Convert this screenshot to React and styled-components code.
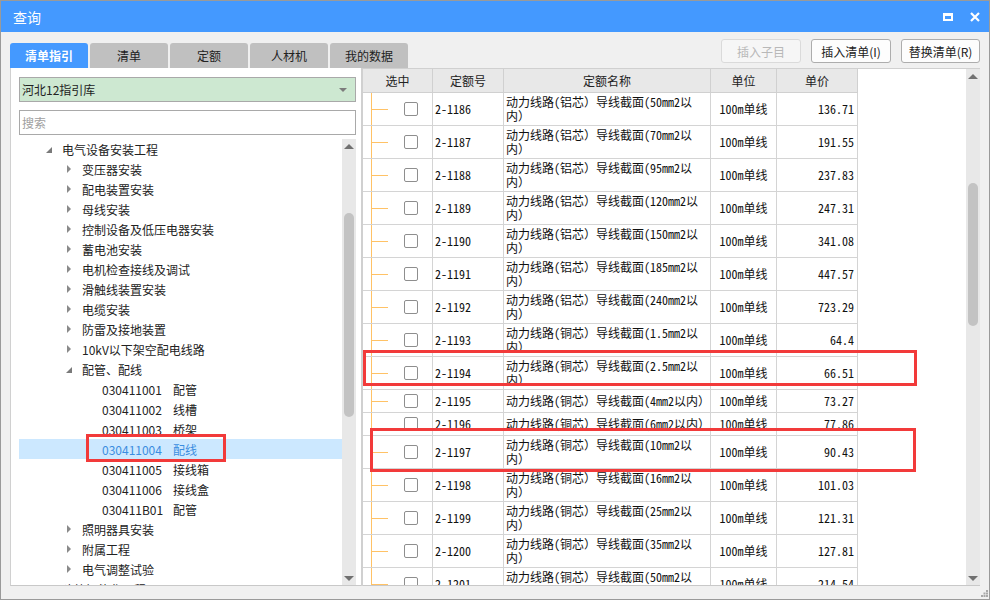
import React from 'react';
import styled, { createGlobalStyle } from 'styled-components';

const GlobalStyle = createGlobalStyle`
  html, body {
    margin: 0;
    padding: 0;
    background: #fff;
  }
  body {
    font-family: "Noto Sans CJK SC", "Microsoft YaHei", sans-serif;
  }
`;

const Window = styled.div`
  width: 990px;
  height: 600px;
  box-sizing: border-box;
  border: 1px solid #9a9a9a;
  background: #f0f0f0;
  display: flex;
  flex-direction: column;
  overflow: hidden;
  font-family: "Noto Sans CJK SC", "Microsoft YaHei", sans-serif;
  font-size: 12px;
  color: #222;
`;

const TitleBar = styled.div`
  height: 31px;
  flex: none;
  background: #4499ff;
  display: flex;
  align-items: center;
  justify-content: space-between;
  padding: 0 9px 0 12px;
  color: #fff;
  font-size: 14px;
`;

const TitleActions = styled.div`
  display: flex;
  align-items: center;
  gap: 17px;
`;

const MaxIcon = styled.span`
  display: block;
  width: 10px;
  height: 8px;
  box-sizing: border-box;
  border: 2px solid #fff;
  border-top-width: 3px;
`;

const Toolbar = styled.div`
  height: 36px;
  flex: none;
  display: flex;
  justify-content: space-between;
  padding: 0 9px;
`;

const Tabs = styled.div`
  display: flex;
  gap: 2px;
  align-self: flex-end;
`;

const Tab = styled.div`
  width: 78px;
  height: 25px;
  display: flex;
  align-items: center;
  justify-content: center;
  border-radius: 3px 3px 0 0;
  font-size: 12px;
  background: ${p => (p.$active ? '#4499ff' : '#c0c0c0')};
  color: ${p => (p.$active ? '#fff' : '#222')};
  font-weight: ${p => (p.$active ? 600 : 400)};
`;

const Buttons = styled.div`
  display: flex;
  gap: 10px;
  margin-top: 7px;
`;

const ToolButton = styled.button`
  width: ${p => p.$w}px;
  height: 24px;
  box-sizing: border-box;
  padding: 0;
  border: 1px solid ${p => (p.disabled ? '#dadada' : '#adadad')};
  border-radius: 3px;
  background: ${p => (p.disabled ? '#f6f6f6' : '#fdfdfd')};
  color: ${p => (p.disabled ? '#b8b8b8' : '#222')};
  font-family: inherit;
  font-size: 12px;
`;

const Content = styled.div`
  height: 518px;
  flex: none;
  display: flex;
  padding: 0 9px;
`;

const LeftPanel = styled.div`
  position: relative;
  width: 351px;
  box-sizing: border-box;
  background: #fff;
  border-left: 1px solid #d0d0d0;
  border-bottom: 1px solid #c8c8c8;
  padding: 9px 5px 0 8px;
  display: flex;
  flex-direction: column;
`;

const Field = styled.div`
  height: 25px;
  flex: none;
  box-sizing: border-box;
  border: 1px solid #a9a9a9;
  display: flex;
  align-items: center;
  justify-content: space-between;
  padding: 0 8px 0 2px;
  background: ${p => (p.$tint ? '#cde8d1' : '#fff')};
  margin-top: ${p => p.$gap || 0}px;
  color: ${p => (p.$muted ? '#a0a0a0' : '#222')};
  font-size: 12px;
`;

const DropArrow = styled.span`
  width: 0;
  height: 0;
  border-left: 4px solid transparent;
  border-right: 4px solid transparent;
  border-top: 4px solid #7c7c7c;
`;

const TreeArea = styled.div`
  flex: 1;
  margin-top: 4px;
  display: flex;
  min-height: 0;
`;

const TreeList = styled.div`
  flex: 1;
  overflow: hidden;
`;

const TreeRow = styled.div`
  height: 20px;
  display: flex;
  align-items: center;
  padding-left: ${p => 27 + (p.$level - 1) * 20}px;
  background: ${p => (p.$selected ? '#cce8ff' : 'transparent')};
  color: ${p => (p.$selected ? '#3b8de0' : '#222')};
  white-space: nowrap;
  font-size: 12px;
`;

const Toggle = styled.span`
  width: 16px;
  flex: none;
  display: flex;
  align-items: center;
`;

const Caret = styled.span`
  width: 0;
  height: 0;
  ${p =>
    p.$open
      ? `border-left: 6px solid transparent; border-bottom: 6px solid #7a7a7a; margin-top: 1px;`
      : `border-top: 4px solid transparent; border-bottom: 4px solid transparent; border-left: 4px solid #8a8a8a; margin-left: 1px;`}
`;

const Code = styled.span`
  display: inline-block;
  width: 71px;
`;

const ScrollBar = styled.div`
  width: 14px;
  flex: none;
  background: #e8e8e8;
  display: flex;
  flex-direction: column;
  align-items: center;
`;

const ScrollArrow = styled.div`
  height: 14px;
  flex: none;
  display: flex;
  align-items: center;
  justify-content: center;
  &::after {
    content: '';
    border-left: 5px solid transparent;
    border-right: 5px solid transparent;
    ${p => (p.$down ? 'border-top: 5px solid #707070;' : 'border-bottom: 5px solid #707070;')}
  }
`;

const ScrollTrack = styled.div`
  flex: 1;
  width: 100%;
  display: flex;
  justify-content: center;
`;

const Thumb = styled.div`
  width: 10px;
  margin-top: ${p => p.$top}px;
  height: ${p => p.$h}px;
  border-radius: 5px;
  background: #c3c3c3;
`;

const Divider = styled.div`
  width: 2px;
  flex: none;
  background: #d0d0d0;
`;

const TablePanel = styled.div`
  position: relative;
  flex: 1;
  background: #fff;
  border-top: 1px solid #d0d0d0;
  border-bottom: 1px solid #c8c8c8;
  display: flex;
`;

const Grid = styled.div`
  flex: 1;
  overflow: hidden;
`;

const HeadRow = styled.div`
  display: flex;
  height: 24px;
`;

const HeadCell = styled.div`
  width: ${p => p.$w}px;
  box-sizing: border-box;
  background: #e8e8e8;
  border-right: 1px solid #d0d0d0;
  border-bottom: 1px solid #d0d0d0;
  display: flex;
  align-items: center;
  justify-content: center;
  color: #222;
  font-size: 12px;
`;

const Row = styled.div`
  display: flex;
  height: ${p => p.$h}px;
  font-family: "Noto Sans Mono CJK SC", "Noto Sans CJK SC", monospace;
  font-size: 12px;
  line-height: 14px;
  color: #111;
`;

const Cell = styled.div`
  width: ${p => p.$w}px;
  flex: none;
  box-sizing: border-box;
  border-right: 1px solid #d4d4d4;
  border-bottom: 1px solid #d4d4d4;
  display: flex;
  align-items: center;
  overflow: hidden;
  white-space: nowrap;
  justify-content: ${p => p.$align || 'flex-start'};
  padding: ${p => (p.$align === 'flex-end' ? '0 3px 0 0' : p.$align === 'center' ? '0' : '0 0 0 2px')};
`;

const SelectCell = styled(Cell)`
  align-items: stretch;
  padding: 0;
`;

const Branch = styled.div`
  width: 16px;
  margin-left: 8px;
  border-left: 1px solid #ffc266;
  display: flex;
  align-items: center;
  &::after {
    content: '';
    display: ${p => (p.$leaf ? 'block' : 'none')};
    width: 16px;
    height: 1px;
    background: #ffc266;
  }
`;

const CheckBox = styled.span`
  align-self: center;
  width: 14px;
  height: 14px;
  margin-left: 16px;
  box-sizing: border-box;
  border: 1px solid #8e8e8e;
  border-radius: 2px;
  background: #fff;
`;

const NameText = styled.div`
  display: flex;
  flex-direction: column;
`;

const Mark = styled.div`
  position: absolute;
  left: ${p => p.$x}px;
  top: ${p => p.$y}px;
  width: ${p => p.$w}px;
  height: ${p => p.$h}px;
  box-sizing: border-box;
  border: 3px solid #f23a3a;
  pointer-events: none;
`;

const Footer = styled.div`
  flex: 1;
  display: flex;
  justify-content: flex-end;
  align-items: flex-end;
  padding: 0 1px 2px 0;
`;

const COLS = [70, 71, 207, 66, 81];

const treeItems = [
  { level: 1, open: true, text: '电气设备安装工程' },
  { level: 2, text: '变压器安装' },
  { level: 2, text: '配电装置安装' },
  { level: 2, text: '母线安装' },
  { level: 2, text: '控制设备及低压电器安装' },
  { level: 2, text: '蓄电池安装' },
  { level: 2, text: '电机检查接线及调试' },
  { level: 2, text: '滑触线装置安装' },
  { level: 2, text: '电缆安装' },
  { level: 2, text: '防雷及接地装置' },
  { level: 2, text: '10kV以下架空配电线路' },
  { level: 2, open: true, text: '配管、配线' },
  { level: 3, code: '030411001', text: '配管' },
  { level: 3, code: '030411002', text: '线槽' },
  { level: 3, code: '030411003', text: '桥架' },
  { level: 3, code: '030411004', text: '配线', selected: true },
  { level: 3, code: '030411005', text: '接线箱' },
  { level: 3, code: '030411006', text: '接线盒' },
  { level: 3, code: '030411B01', text: '配管' },
  { level: 2, text: '照明器具安装' },
  { level: 2, text: '附属工程' },
  { level: 2, text: '电气调整试验' },
  { level: 1, text: '建筑智能化工程' },
];

const quotaRows = [
  { code: '2-1186', core: '铝芯', size: '50', price: '136.71' },
  { code: '2-1187', core: '铝芯', size: '70', price: '191.55' },
  { code: '2-1188', core: '铝芯', size: '95', price: '237.83' },
  { code: '2-1189', core: '铝芯', size: '120', price: '247.31' },
  { code: '2-1190', core: '铝芯', size: '150', price: '341.08' },
  { code: '2-1191', core: '铝芯', size: '185', price: '447.57' },
  { code: '2-1192', core: '铝芯', size: '240', price: '723.29' },
  { code: '2-1193', core: '铜芯', size: '1.5', price: '64.4' },
  { code: '2-1194', core: '铜芯', size: '2.5', price: '66.51' },
  { code: '2-1195', core: '铜芯', size: '4', price: '73.27', single: true },
  { code: '2-1196', core: '铜芯', size: '6', price: '77.86', single: true, hidden: true },
  { code: '2-1197', core: '铜芯', size: '10', price: '90.43' },
  { code: '2-1198', core: '铜芯', size: '16', price: '101.03' },
  { code: '2-1199', core: '铜芯', size: '25', price: '121.31' },
  { code: '2-1200', core: '铜芯', size: '35', price: '127.81' },
  { code: '2-1201', core: '铜芯', size: '50', price: '214.54' },
];

function CloseIcon() {
  return (
    <svg width="10" height="10" viewBox="0 0 10 10">
      <path d="M1 1 L9 9 M9 1 L1 9" stroke="#fff" strokeWidth="2.2" />
    </svg>
  );
}

function Grip() {
  return (
    <svg width="7" height="7" viewBox="0 0 7 7">
      <rect x="5" y="0" width="2" height="2" fill="#a8a8a8" />
      <rect x="2.5" y="2.5" width="2" height="2" fill="#a8a8a8" />
      <rect x="5" y="2.5" width="2" height="2" fill="#a8a8a8" />
      <rect x="0" y="5" width="2" height="2" fill="#a8a8a8" />
      <rect x="2.5" y="5" width="2" height="2" fill="#a8a8a8" />
      <rect x="5" y="5" width="2" height="2" fill="#a8a8a8" />
    </svg>
  );
}

function GuideTree() {
  return (
    <TreeArea>
      <TreeList>
        {treeItems.map((item, i) => (
          <TreeRow key={i} $level={item.level} $selected={item.selected}>
            <Toggle>{item.level < 3 && <Caret $open={item.open} />}</Toggle>
            {item.code && <Code>{item.code}</Code>}
            <span>{item.text}</span>
          </TreeRow>
        ))}
      </TreeList>
      <ScrollBar>
        <ScrollArrow />
        <ScrollTrack>
          <Thumb $top={60} $h={204} />
        </ScrollTrack>
        <ScrollArrow $down />
      </ScrollBar>
    </TreeArea>
  );
}

function QuotaTable() {
  const heads = ['选中', '定额号', '定额名称', '单位', '单价'];
  return (
    <Grid>
      <HeadRow>
        {heads.map((h, i) => (
          <HeadCell key={h} $w={COLS[i]}>{h}</HeadCell>
        ))}
      </HeadRow>
      {quotaRows.map(r => (
        <Row key={r.code} $h={r.single ? 23 : 33}>
          <SelectCell $w={COLS[0]}>
            <Branch $leaf={!r.hidden} />
            <CheckBox />
          </SelectCell>
          <Cell $w={COLS[1]}>{r.code}</Cell>
          <Cell $w={COLS[2]}>
            {r.single ? (
              <span>{`动力线路(${r.core}）导线截面(${r.size}mm2以内）`}</span>
            ) : (
              <NameText>
                <span>{`动力线路(${r.core}）导线截面(${r.size}mm2以`}</span>
                <span>内）</span>
              </NameText>
            )}
          </Cell>
          <Cell $w={COLS[3]} $align="center">100m单线</Cell>
          <Cell $w={COLS[4]} $align="flex-end">{r.price}</Cell>
        </Row>
      ))}
    </Grid>
  );
}

export default function App() {
  return (
    <>
      <GlobalStyle />
      <Window>
        <TitleBar>
          <span>查询</span>
          <TitleActions>
            <MaxIcon />
            <CloseIcon />
          </TitleActions>
        </TitleBar>
        <Toolbar>
          <Tabs>
            <Tab $active>清单指引</Tab>
            <Tab>清单</Tab>
            <Tab>定额</Tab>
            <Tab>人材机</Tab>
            <Tab>我的数据</Tab>
          </Tabs>
          <Buttons>
            <ToolButton $w={80} disabled>插入子目</ToolButton>
            <ToolButton $w={80}>插入清单(I)</ToolButton>
            <ToolButton $w={79}>替换清单(R)</ToolButton>
          </Buttons>
        </Toolbar>
        <Content>
          <LeftPanel>
            <Field $tint>
              <span>河北12指引库</span>
              <DropArrow />
            </Field>
            <Field $gap={8} $muted>搜索</Field>
            <GuideTree />
            <Mark $x={75} $y={366} $w={140} $h={28} />
          </LeftPanel>
          <Divider />
          <TablePanel>
            <QuotaTable />
            <ScrollBar>
              <ScrollArrow />
              <ScrollTrack>
                <Thumb $top={100} $h={143} />
              </ScrollTrack>
              <ScrollArrow $down />
            </ScrollBar>
            <Mark $x={0} $y={281} $w={554} $h={36} />
            <Mark $x={7} $y={359} $w={546} $h={44} />
          </TablePanel>
        </Content>
        <Footer>
          <Grip />
        </Footer>
      </Window>
    </>
  );
}
